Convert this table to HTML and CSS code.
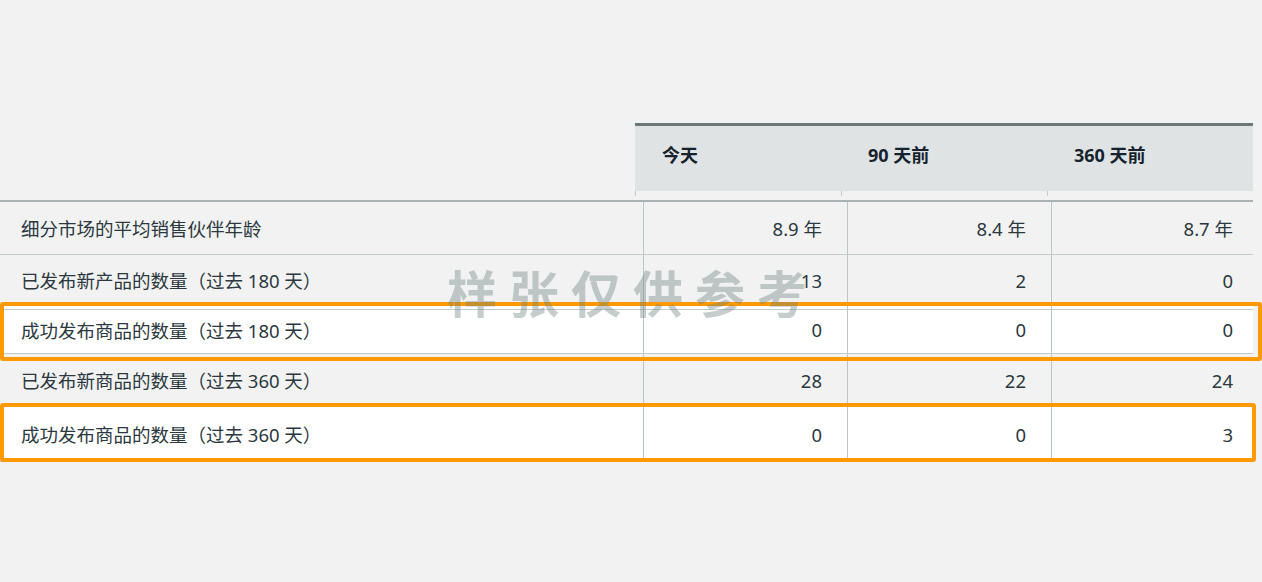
FILE: index.html
```html
<!DOCTYPE html>
<html lang="zh">
<head>
<meta charset="utf-8">
<link rel="stylesheet" href="styles.css">
</head>
<body>
<div class="page">
  <div class="head-row">
    <div class="head-cell">今天</div>
    <div class="head-cell">90 天前</div>
    <div class="head-cell">360 天前</div>
  </div>
  <div class="tick-row">
    <div class="tick"></div>
    <div class="tick"></div>
    <div class="tick"></div>
  </div>
  <div class="table">
    <div class="row r1">
      <div class="label">细分市场的平均销售伙伴年龄</div>
      <div class="val">8.9 年</div>
      <div class="val">8.4 年</div>
      <div class="val last">8.7 年</div>
    </div>
    <div class="row r2">
      <div class="label">已发布新产品的数量（过去 180 天）</div>
      <div class="val">13</div>
      <div class="val">2</div>
      <div class="val last">0</div>
    </div>
    <div class="row r3 hl">
      <div class="label">成功发布商品的数量（过去 180 天）</div>
      <div class="val">0</div>
      <div class="val">0</div>
      <div class="val last">0</div>
    </div>
    <div class="row r4">
      <div class="label">已发布新商品的数量（过去 360 天）</div>
      <div class="val">28</div>
      <div class="val">22</div>
      <div class="val last">24</div>
    </div>
    <div class="row r5 hl">
      <div class="label">成功发布商品的数量（过去 360 天）</div>
      <div class="val">0</div>
      <div class="val">0</div>
      <div class="val last">3</div>
    </div>
  </div>
  <div class="mark mark1"></div>
  <div class="mark mark2"></div>
  <div class="watermark">样张仅供参考</div>
</div>
</body>
</html>
```

FILE: styles.css
```css
* { box-sizing: border-box; }
html, body { margin: 0; padding: 0; }
body {
  background: #f2f2f2;
  font-family: "Noto Sans", "Noto Sans CJK SC", sans-serif;
  color: #232f3e;
  width: 1262px;
  height: 582px;
  overflow: hidden;
}
.page {
  position: relative;
  padding-top: 123px;
  height: 582px;
}
.head-row {
  display: flex;
  margin-left: 635px;
  width: 618px;
  height: 68px;
  border-top: 3px solid #6d7879;
  background: #dfe3e4;
}
.head-cell {
  flex: 0 0 206px;
  padding-left: 27px;
  display: flex;
  align-items: center;
  font-weight: 700;
  font-size: 18px;
  color: #16232e;
  padding-bottom: 10px;
}
.tick-row {
  display: flex;
  margin-left: 635px;
  width: 618px;
  height: 9px;
}
.tick {
  flex: 0 0 206px;
  height: 5px;
  border-left: 1px solid #c2cacb;
}
.table {
  width: 1253px;
  border-top: 2px solid #a9b3b4;
}
.row {
  display: grid;
  grid-template-columns: 643px 204px 204px 202px;
  border-bottom: 1px solid #c3cacb;
  font-size: 18.5px;
}
.r1 { height: 53px; }
.r2 { height: 51px; }
.r3 { height: 48px; }
.r4 { height: 53px; }
.r5 { height: 55px; }
.hl { background: #ffffff; }
.r3 { box-shadow: inset 0 3px 0 #ffffff, inset 0 4px 0 #c3cacb; }
.label {
  display: flex;
  align-items: center;
  padding-left: 21px;
  color: #2b3840;
}
.val {
  display: flex;
  align-items: center;
  justify-content: flex-end;
  padding-right: 25px;
  border-left: 1px solid #bdc6c7;
  color: #2b3840;
}
.val.last { padding-right: 20px; }
.mark {
  position: absolute;
  left: 0;
  border: 4px solid #ff9900;
  border-radius: 3px;
}
.mark1 { top: 302px; width: 1262px; height: 59px; }
.mark2 { top: 403px; width: 1256px; height: 59px; }
.watermark {
  position: absolute;
  left: 447px;
  top: 256px;
  font-family: "Noto Sans CJK SC", sans-serif;
  font-weight: 700;
  font-size: 50px;
  letter-spacing: 12px;
  color: rgba(110, 130, 130, 0.4);
  line-height: 70px;
  white-space: nowrap;
}
```
